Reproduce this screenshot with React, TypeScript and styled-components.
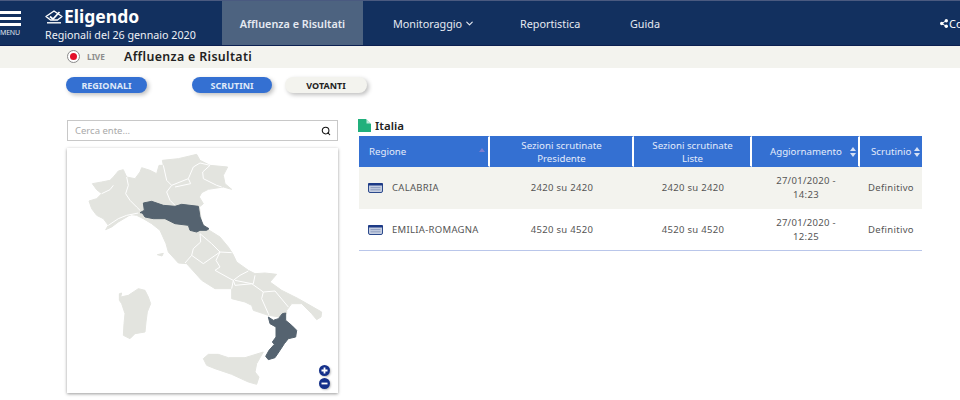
import React from 'react';
import styled, { createGlobalStyle } from 'styled-components';
import { ChevronDown, Search } from 'lucide-react';

const Global = createGlobalStyle`
  html, body { margin: 0; padding: 0; background: #fff; width: 960px; height: 400px; overflow: hidden; }
  body { font-family: "Noto Sans", "Open Sans", sans-serif; color: #4a4a4a; }
`;

const Page = styled.div`width: 960px; height: 400px; overflow: hidden;`;

const Header = styled.header`
  height: 46px; box-sizing: border-box; display: flex; align-items: stretch;
  background: #12305f; border-top: 1px solid #4a5a80; border-bottom: 1px solid #0b1f50; color: #fff;
`;
const MenuButton = styled.div`
  width: 21px; margin-right: 24px; display: flex; flex-direction: column; padding-top: 10px;
`;
const MenuBar = styled.span`
  display: block; width: 21px; height: 2.5px; background: #fff; margin-bottom: 3.5px;
`;
const MenuLabel = styled.span`font-size: 7px; line-height: 8px; width: 21px; color: #dfe4ec; letter-spacing: -0.2px; margin-top: 0;`;
const Brand = styled.div`width: 177px; display: flex; flex-direction: column; padding-top: 5px;`;
const BrandRow = styled.div`display: flex; align-items: center; gap: 1px; height: 21px;`;
const BrandName = styled.span`font-size: 17.5px; font-weight: 700; line-height: 21px;`;
const BrandSub = styled.span`font-size: 10.7px; line-height: 14px; margin-top: 1px; color: #eef1f6; white-space: nowrap;`;
const Nav = styled.nav`display: flex; align-items: stretch; flex: 1;`;
const NavItem = styled.a<{ $active?: boolean; $w: number }>`
  width: ${p => p.$w}px; flex: none; display: flex; align-items: center; justify-content: ${p => p.$active ? 'center' : 'flex-start'};
  background: ${p => p.$active ? '#4d6380' : 'transparent'};
  font-size: 10.8px; font-weight: ${p => p.$active ? 600 : 400}; color: #e6eaf2; white-space: nowrap; gap: 2px;
`;
const ShareBox = styled.div`
  flex: none; margin-left: auto; width: 20px; display: flex; align-items: center; gap: 1px; font-size: 11px; overflow: hidden; white-space: nowrap;
  svg { flex: none; }
`;

const SubBar = styled.div`
  height: 22px; background: #f3f3ee; padding-left: 67px; display: flex; align-items: center; padding-bottom: 1px; box-sizing: border-box;
`;
const Live = styled.span`
  width: 13px; height: 13px; box-sizing: border-box; border: 1px solid #8a8a8a; border-radius: 50%; background: #fff;
  display: flex; align-items: center; justify-content: center; margin-right: 7px;
`;
const LiveDot = styled.span`width: 7px; height: 7px; border-radius: 50%; background: #e3102a;`;
const LiveText = styled.span`font-size: 8.3px; font-weight: 700; color: #8d8d8d; width: 37px;`;
const SubTitle = styled.h1`margin: 0; font-size: 12.4px; font-weight: 600; color: #222; letter-spacing: 0.35px;`;

const Buttons = styled.div`display: flex; padding: 9px 0 0 66px; height: 16px;`;
const Pill = styled.button<{ $on?: boolean; $w: number; $mr: number }>`
  width: ${p => p.$w}px; margin-right: ${p => p.$mr}px; height: 16px; border: 0; padding: 0; border-radius: 8px;
  background: ${p => p.$on ? '#3470d2' : '#f3f3ee'}; color: ${p => p.$on ? '#dfe8f8' : '#222'};
  font-family: inherit; font-size: 9px; font-weight: 700; box-shadow: 2px 2px 4px rgba(0,0,0,.25);
`;

const Main = styled.main`display: flex; padding: 27px 0 0 67px; gap: 21px;`;
const LeftCol = styled.div`width: 271px; flex: none;`;
const SearchBox = styled.div`
  height: 21px; box-sizing: border-box; border: 1px solid #c8c8c8; display: flex; align-items: center; justify-content: space-between;
  padding: 0 6px 0 7px; font-size: 9.5px; color: #a9a9a9; margin-bottom: 7px;
`;
const MapPanel = styled.div`
  position: relative; height: 245px; box-shadow: 0 1px 3px rgba(0,0,0,.4);
`;
const MapSvg = styled.svg`display: block; width: 271px; height: 245px;`;
const Zoom = styled.div`position: absolute; right: 8px; bottom: 4px; display: flex; flex-direction: column; gap: 2px;`;
const ZoomBtn = styled.span`
  width: 11px; height: 11px; border-radius: 50%; background: #14308a; color: #fff; display: flex; align-items: center; justify-content: center;
  box-shadow: 1px 1px 2px rgba(0,0,0,.25);
  svg { display: block; }
`;

const RightCol = styled.div`width: 563px; flex: none; margin-top: -2px;`;
const CardTitle = styled.div`
  display: flex; align-items: center; gap: 4px; height: 18px; box-sizing: border-box; padding-bottom: 3px; margin-left: -1px;
  font-size: 11.5px; font-weight: 600; color: #222;
`;
const Table = styled.table`
  width: 563px; border-collapse: separate; border-spacing: 0; table-layout: fixed; font-size: 9.5px; letter-spacing: 0.3px; color: #555;
`;
const Th = styled.th<{ $w: number; $pad?: number }>`
  width: ${p => p.$w}px; height: 31px; box-sizing: border-box; padding: 0; background: #3470d2; color: #e3ebfa; font-weight: 400; font-size: 9.7px; line-height: 13px; letter-spacing: 0;
  border: 1px solid #3470d2; border-right: 2px solid #fff; text-align: center; position: relative;
  &:last-child { border-right: 0; }
  ${p => p.$pad !== undefined ? `text-align: left; padding-left: ${p.$pad}px;` : ''}
`;
const Row = styled.tr<{ $alt?: boolean }>`
  background: ${p => p.$alt ? '#f3f3ee' : '#fff'};
`;
const Td = styled.td<{ $last?: boolean }>`
  height: 42px; box-sizing: border-box; padding: 0; text-align: center; line-height: 14px;
  ${p => p.$last ? 'border-bottom: 1px solid #b9c6ea;' : ''}
`;
const RegionCell = styled.div`display: flex; align-items: center; gap: 9px; padding-left: 9px;`;
const SortWrap = styled.span<{ $gap: number }>`display: inline-flex; align-items: center; gap: ${p => p.$gap}px;`;
const Caret = styled.svg`display: block; flex: none;`;
const UpMark = styled.svg`position: absolute; right: 3px; top: 11px;`;

const Both = () => (
  <Caret width="6" height="10" viewBox="0 0 6 10"><path d="M3 0l3 4H0zM3 10L0 6h6z" fill="#d5e0f5" /></Caret>
);

const Doc = () => (
  <svg width="13" height="13" viewBox="0 0 13 13"><path d="M0 0h8l5 5v8H0z" fill="#21b07c" /><path d="M8.5 0L13 4.5H8.5z" fill="#bfead9" /></svg>
);

const CardIcon = () => (
  <svg width="15" height="10" viewBox="0 0 15 10">
    <rect x=".5" y=".5" width="14" height="9" rx="1.5" fill="#c4cde0" stroke="#2c4a8c" />
    <rect x="0" y="0" width="15" height="2.6" rx="1" fill="#1d3a86" />
    <path d="M2.5 4.6h10M2.5 6.8h10" stroke="#8090b8" strokeWidth=".8" />
  </svg>
);

const Logo = () => (
  <svg width="18" height="14" viewBox="0 0 18 14" fill="none">
    <path d="M9 1L17 6.5l-4.5 3.5h-7L1 6.5z" stroke="#fff" strokeWidth="1.4" strokeLinejoin="round" />
    <path d="M5 6.5l3 2.6L14.5 2" stroke="#fff" strokeWidth="1.8" />
    <path d="M2 12.8h14" stroke="#fff" strokeWidth="1.4" />
  </svg>
);

const ShareIcon = () => (
  <svg width="8" height="9" viewBox="0 0 8 9">
    <circle cx="1.7" cy="4.5" r="1.7" fill="#fff" />
    <circle cx="6.3" cy="1.7" r="1.7" fill="#fff" />
    <circle cx="6.3" cy="7.3" r="1.7" fill="#fff" />
    <path d="M1.7 4.5L6.3 1.7M1.7 4.5L6.3 7.3" stroke="#fff" strokeWidth="1" />
  </svg>
);

const borders = [
  'M200 185L205 210L197 235L210 255L230 275L240 285',
  'M125 235L150 223L160 210',
  'M145 330L175 310L200 300L235 293',
  'M310 150L320 195L335 210L320 230L330 255L345 270',
  'M335 210L385 190L400 155L420 143L450 150',
  'M450 150L428 170L430 190L470 210L485 215',
  'M385 190L392 205L345 215',
  'M420 355L422 380L400 400L395 420L375 443',
  'M420 355L455 385L480 410L515 412',
  'M395 420L430 445L480 410',
  'M480 410L468 435L480 455L465 465L510 490L520 495L540 480L565 467',
  'M520 495L525 510L580 505L585 480',
  'M520 495L515 520',
  'M525 495L575 505L610 530L645 527L685 575',
  'M610 530L605 550L625 595L627 600',
];

const mainland = 'M137 343L145 330L130 310L110 300L95 280L87 257L110 250L125 235L110 223L97 205L125 200L150 195L160 185L175 167L190 163L200 185L225 190L240 170L245 157L270 165L290 175L297 150L310 150L307 135L355 130L410 117L420 135L450 150L503 155L490 180L495 205L515 222L490 215L445 222L425 232L418 245L430 265L418 275L425 320L440 340L480 365L505 395L518 415L530 440L565 465L585 475L615 473L650 477L630 500L665 525L715 550L750 570L785 590L783 605L770 613L755 595L725 565L695 565L680 585L680 595L660 605L625 600L580 585L575 570L555 560L515 550L515 520L465 520L425 495L380 445L355 443L325 410L318 385L300 345L275 325L250 310L230 300L215 298L205 302L175 320L155 335Z';
const sicily = 'M430 730L445 717L475 717L505 727L555 727L610 710L590 745L585 770L597 785L590 807L565 800L515 777L465 760L440 750Z';
const sardinia = 'M178 535L185 533L182 545L205 540L235 520L255 525L265 545L272 565L262 590L258 620L255 650L225 655L210 670L190 660L192 625L195 595L185 565L178 555Z';
const elba = 'M292 418L310 414L306 422Z';
const emilia = 'M240 292L253 285L250 263L275 258L310 270L345 273L365 267L415 273L420 305L430 330L447 340L440 345L420 345L410 350L390 345L385 330L345 325L315 310L280 310L255 305L247 293Z';
const calabria = 'M625 605L640 615L655 610L667 595L677 593L677 615L695 630L710 645L707 665L685 670L673 685L660 705L645 727L625 733L617 723L627 705L643 687L637 680L648 665L648 635L630 625Z';

const ItalyMap = () => (
  <MapSvg viewBox="22 98 811 735">
    <defs><filter id="soft"><feGaussianBlur stdDeviation="1.2" /></filter></defs>
    <g filter="url(#soft)">
      {[mainland, sicily, sardinia, elba].map(d => (
        <path key={d} d={d} fill="#e3e4df" stroke="#e3e4df" strokeWidth="3" strokeLinejoin="round" />
      ))}
      {borders.map(d => <path key={d} d={d} fill="none" stroke="#fff" strokeWidth="3" strokeLinejoin="round" />)}
      {[emilia, calabria].map(d => (
        <path key={d} d={d} fill="#55636f" stroke="#55636f" strokeWidth="3" strokeLinejoin="round" />
      ))}
    </g>
  </MapSvg>
);

const rows = [
  { name: 'CALABRIA', pres: '2420 su 2420', list: '2420 su 2420', date: '27/01/2020 -', time: '14:23', alt: true },
  { name: 'EMILIA-ROMAGNA', pres: '4520 su 4520', list: '4520 su 4520', date: '27/01/2020 -', time: '12:25', alt: false },
];

export default function App() {
  return (
    <Page>
      <Global />
      <Header>
        <MenuButton>
          <MenuBar /><MenuBar /><MenuBar />
          <MenuLabel>MENU</MenuLabel>
        </MenuButton>
        <Brand>
          <BrandRow><Logo /><BrandName>Eligendo</BrandName></BrandRow>
          <BrandSub>Regionali del 26 gennaio 2020</BrandSub>
        </Brand>
        <Nav>
          <NavItem $active $w={141}>Affluenza e Risultati</NavItem>
          <NavItem $w={30} />
          <NavItem $w={127}>Monitoraggio <ChevronDown size={11} strokeWidth={2.5} /></NavItem>
          <NavItem $w={110}>Reportistica</NavItem>
          <NavItem $w={80}>Guida</NavItem>
        </Nav>
        <ShareBox><ShareIcon />Condividi</ShareBox>
      </Header>
      <SubBar>
        <Live><LiveDot /></Live>
        <LiveText>LIVE</LiveText>
        <SubTitle>Affluenza e Risultati</SubTitle>
      </SubBar>
      <Buttons>
        <Pill $on $w={81} $mr={45}>REGIONALI</Pill>
        <Pill $on $w={80} $mr={13}>SCRUTINI</Pill>
        <Pill $w={82} $mr={0}>VOTANTI</Pill>
      </Buttons>
      <Main>
        <LeftCol>
          <SearchBox>Cerca ente...<Search size={10} color="#111" strokeWidth={2.5} /></SearchBox>
          <MapPanel>
            <ItalyMap />
            <Zoom>
              <ZoomBtn><svg width="7" height="7" viewBox="0 0 7 7"><path d="M3.5 0.5v6M0.5 3.5h6" stroke="#fff" strokeWidth="1.8" /></svg></ZoomBtn>
              <ZoomBtn><svg width="7" height="7" viewBox="0 0 7 7"><path d="M0.5 3.5h6" stroke="#fff" strokeWidth="1.8" /></svg></ZoomBtn>
            </Zoom>
          </MapPanel>
        </LeftCol>
        <RightCol>
          <CardTitle><Doc />Italia</CardTitle>
          <Table>
            <thead>
              <tr>
                <Th $w={131} $pad={9}>Regione<UpMark width="6" height="4" viewBox="0 0 6 4"><path d="M3 0l3 4H0z" fill="#7d7ed0" /></UpMark></Th>
                <Th $w={144}>Sezioni scrutinate<br />Presidente</Th>
                <Th $w={118}>Sezioni scrutinate<br />Liste</Th>
                <Th $w={108} $pad={17}><SortWrap $gap={8}>Aggiornamento <Both /></SortWrap></Th>
                <Th $w={62} $pad={10}><SortWrap $gap={3}>Scrutinio <Both /></SortWrap></Th>
              </tr>
            </thead>
            <tbody>
              {rows.map(r => (
                <Row key={r.name} $alt={r.alt}>
                  <Td $last={!r.alt}><RegionCell><CardIcon />{r.name}</RegionCell></Td>
                  <Td $last={!r.alt}>{r.pres}</Td>
                  <Td $last={!r.alt}>{r.list}</Td>
                  <Td $last={!r.alt}>{r.date}<br />{r.time}</Td>
                  <Td $last={!r.alt}>Definitivo</Td>
                </Row>
              ))}
            </tbody>
          </Table>
        </RightCol>
      </Main>
    </Page>
  );
}
